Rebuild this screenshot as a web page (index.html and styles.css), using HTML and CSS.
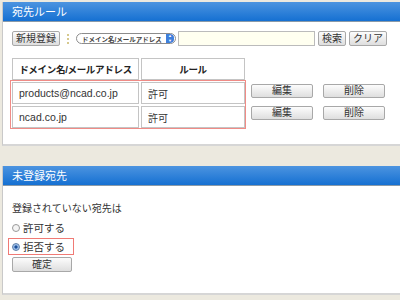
FILE: index.html
```html
<!DOCTYPE html>
<html>
<head>
<title>宛先ルール</title>
<link rel="stylesheet" href="styles.css">
</head>
<body>

<div class="panel first">
<div class="panelHead">宛先ルール</div>

<div class="toolbar">
<button class="btn">新規登録</button>
<span class="sep"></span>
<span class="pick">ドメイン名/メールアドレス<span class="arrows">&#9650;<br>&#9660;</span></span>
<input type="text" class="search">
<button class="btn small">検索</button>
<button class="btn small">クリア</button>
</div>

<div class="ruleArea">
<table class="rules">
<tr><th class="colName">ドメイン名/メールアドレス</th><th class="colRule">ルール</th></tr>
<tr><td class="addr">products@ncad.co.jp</td><td>許可</td></tr>
<tr><td class="addr">ncad.co.jp</td><td>許可</td></tr>
</table>
<div class="outline"></div>
<div class="rowBtns">
<div class="btnRow"><button class="btn wide">編集</button><button class="btn wide">削除</button></div>
<div class="btnRow"><button class="btn wide">編集</button><button class="btn wide">削除</button></div>
</div>
</div>
</div>

<div class="panel second">
<div class="panelHead">未登録宛先</div>
<div class="body2">
<p class="lead">登録されていない宛先は</p>
<label class="opt"><span class="radio"></span>許可する</label>
<label class="opt chosen"><span class="radio on"></span>拒否する</label>
<button class="btn ok">確定</button>
</div>
</div>

</body>
</html>
```

FILE: styles.css
```css
body{
margin:0;
padding-top:2px;
background-color:#ece9df;
font-family:"Liberation Sans","Noto Sans CJK JP",sans-serif;
font-size:10px;
color:#333;
white-space:nowrap;
}

.panel{
margin-left:2px;
background-color:white;
border-left:1px solid #c9c9c9;
border-bottom:2px solid #d6d6d6;
}

.first{
height:142px;
}

.second{
margin-top:20px;
height:127px;
}

.panelHead{
height:20px;
line-height:20px;
padding-left:9px;
color:white;
font-size:11px;
background:linear-gradient(#4c94e0,#1570d2);
border-bottom:1px solid #8a9aa8;
box-sizing:border-box;
}

.toolbar{
display:flex;
align-items:center;
padding:9px 0 0 9px;
height:15px;
}

.btn{
font-family:"Liberation Sans","Noto Sans CJK JP",sans-serif;
font-size:10px;
color:#333;
background:linear-gradient(#fcfcfc,#dedede);
border:1px solid #a8a8a8;
border-radius:2px;
padding:0 3px;
height:15px;
line-height:13px;
box-sizing:border-box;
white-space:nowrap;
}

.small{
margin-left:3px;
}

.sep{
width:0;
height:10px;
border-left:2px dotted #d6c98e;
margin:0 7px 0 7px;
}

.pick{
display:flex;
align-items:center;
justify-content:space-between;
width:100px;
height:11px;
border:1px solid #8c8c8c;
border-radius:6px;
font-size:6.5px;
font-weight:bold;
color:#444;
padding-left:5px;
box-sizing:border-box;
overflow:hidden;
}

.arrows{
display:inline-block;
width:8px;
height:9px;
margin-right:1px;
border-radius:0 4px 4px 0;
background:#3f7fdc;
color:white;
font-size:4px;
line-height:4.5px;
text-align:center;
}

.search{
width:137px;
height:15px;
margin-left:2px;
border:1px solid #bbb;
background-color:#fffff0;
padding:0;
box-sizing:border-box;
}

.ruleArea{
position:relative;
display:flex;
padding:10px 0 0 7px;
}

.rules{
border-spacing:2px;
table-layout:fixed;
width:237px;
}

.rules th,.rules td{
box-sizing:border-box;
border:1px solid #c4c4c4;
height:22px;
padding:0 6px;
overflow:hidden;
}

.rules th{
font-weight:bold;
color:#222;
font-size:9.5px;
padding:0 2px;
letter-spacing:-0.3px;
}

.colName{
width:127px;
}

.colRule{
width:104px;
}

.rules td{
color:#333;
}

.addr{
font-size:10.5px;
}

.outline{
position:absolute;
left:7px;
top:34px;
width:236px;
height:49px;
box-sizing:border-box;
border:1px solid #f08b86;
}

.rowBtns{
padding:28px 0 0 4px;
}

.btnRow{
display:flex;
gap:10px;
margin-bottom:8px;
}

.wide{
width:62px;
height:14px;
line-height:12px;
}

.body2{
padding:16px 9px 0 9px;
}

.lead{
margin:0 0 3px 0;
height:14px;
line-height:14px;
}

.opt{
display:flex;
align-items:center;
height:17px;
width:66px;
box-sizing:border-box;
margin-bottom:2px;
font-size:10.5px;
}

.chosen{
margin-left:-4px;
padding-left:3px;
border:1px solid #f07a75;
}

.radio{
display:inline-block;
width:8px;
height:8px;
box-sizing:border-box;
border:1px solid #9a9a9a;
border-radius:50%;
margin-right:3px;
background:#f4f4f4;
}

.on{
background:radial-gradient(#1a4f9a 30%,#9dbfe9 45%);
border-color:#5f7fa8;
}

.ok{
display:block;
width:60px;
height:15px;
margin-top:1px;
}
```
